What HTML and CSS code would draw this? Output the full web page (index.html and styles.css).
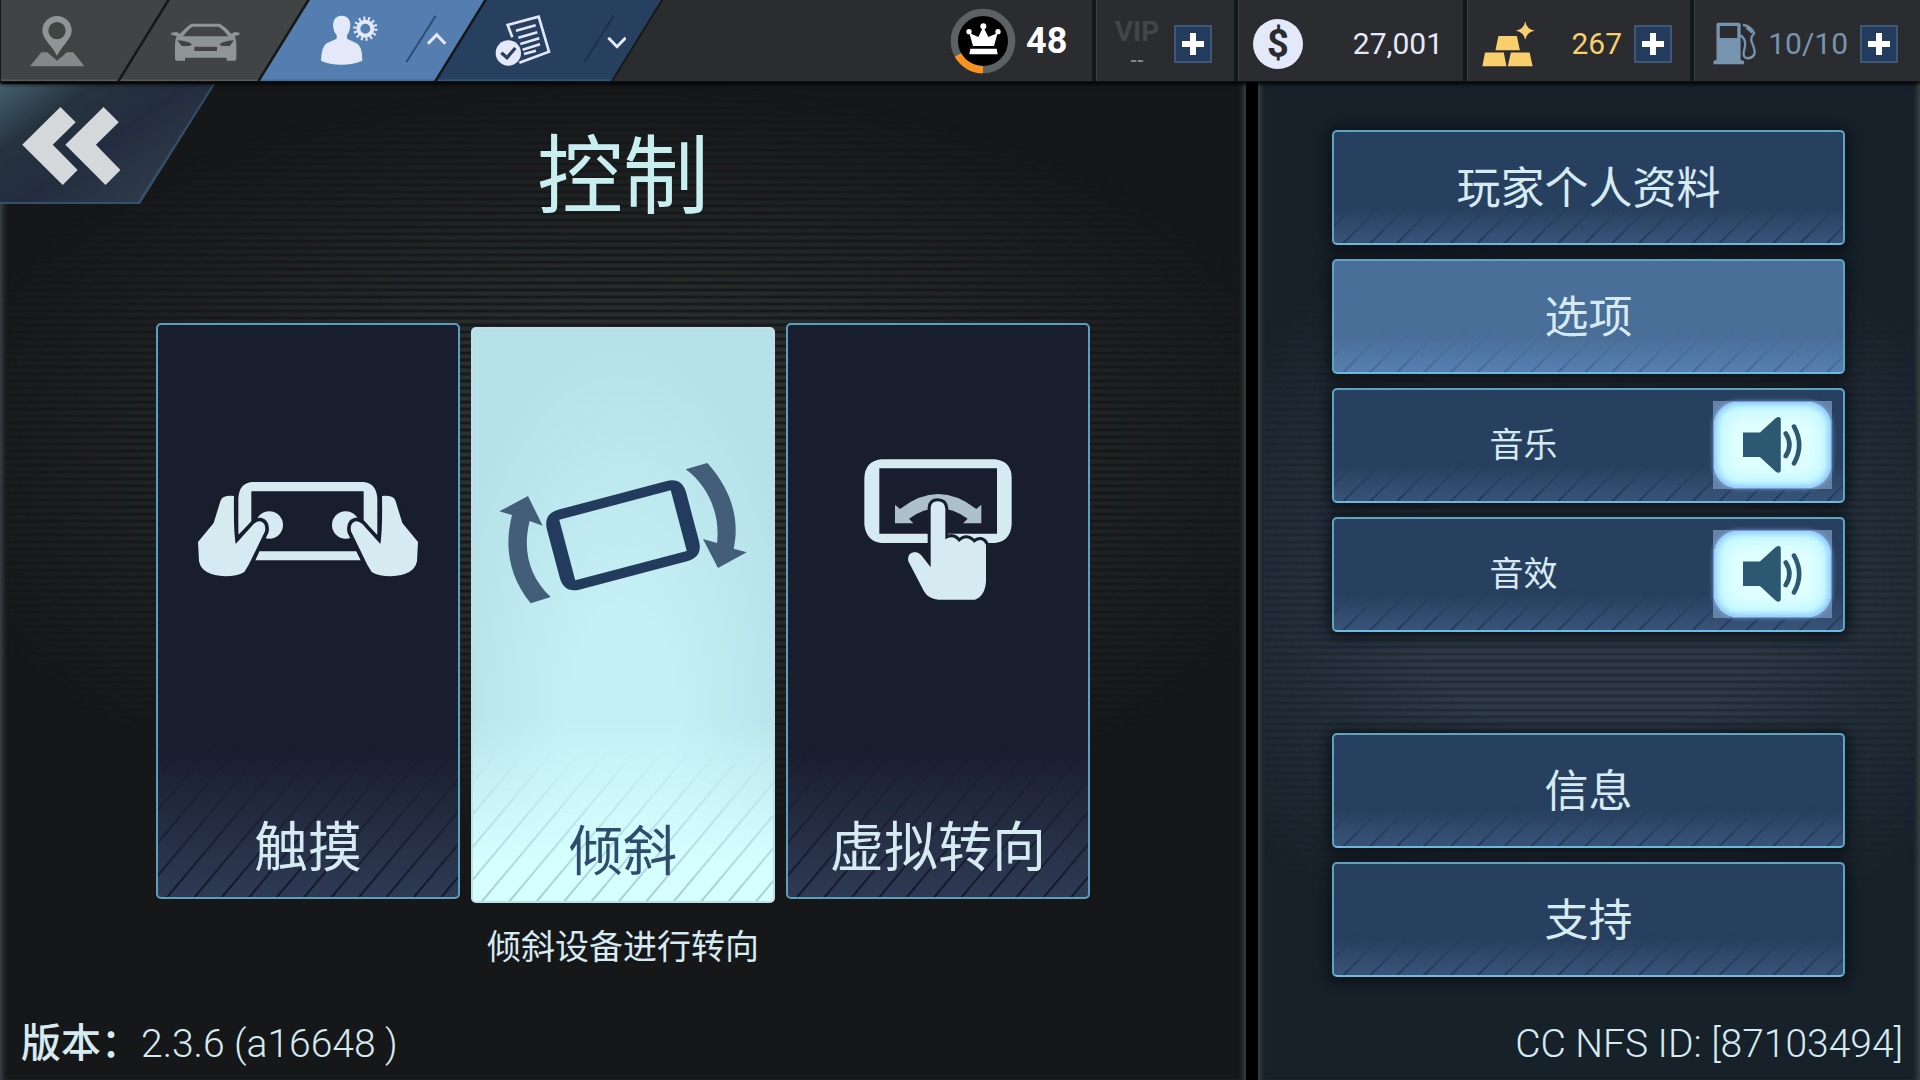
FILE: index.html
```html
<!DOCTYPE html>
<html lang="zh-CN">
<head>
<meta charset="utf-8">
<meta name="viewport" content="width=device-width, initial-scale=1">
<title>控制</title>
<link rel="stylesheet" href="styles.css">
</head>
<body>
<header class="topbar">
  <nav class="tabs">
    <button class="tab tab-map" aria-label="地图">
      <svg width="55" height="54" viewBox="90 42 165 162" fill="#8f9496"><path fill-rule="evenodd" d="M171 168C160 140 127 118 127 92A44 44 0 0 1 215 92C215 118 182 140 171 168ZM171 66A26 26 0 1 0 171 118A26 26 0 1 0 171 66Z"/><path fill="#84888a" d="M124 157H142L171 182L201 157H220L253 199H90Z"/></svg>
    </button>
    <button class="tab tab-car" aria-label="车库">
      <svg width="69" height="54" viewBox="513 42 207 162" fill="#8f9496"><path fill-rule="evenodd" d="M513 98L530 96L540 101Q560 80 574 71H660Q680 83 694 101L704 96L719 98L717 105L704 108Q710 120 709 135V178L705 182H680V173H555V182H529L525 178V135Q525 118 530 108L515 105ZM549 109H685Q672 90 656 80H578Q565 88 549 109ZM532 121L545 138H570L576 132Q555 121 532 121ZM702 121Q679 121 658 132L664 138H689ZM583 140V153H651V140Z"/></svg>
    </button>
    <button class="tab tab-profile" aria-label="个人设置">
      <svg width="57" height="54" viewBox="213 42 171 162"><path fill="#e4e9fa" d="M275 47C295 47 304 62 300 84Q298 98 291 106V116L320 130Q337 138 337 182Q310 194 275 194Q238 194 213 182Q215 138 230 130L260 116V106Q252 98 250 84C247 62 255 47 275 47Z"/><g fill="none" stroke="#e4e9fa"><circle cx="346" cy="86" r="21" stroke-width="12"/><circle cx="346" cy="86" r="31" stroke-width="11" stroke-dasharray="6 7.91"/></g></svg>
      <svg width="42" height="54" viewBox="465 42 126 162" fill="none"><path stroke="#2f4c76" stroke-width="6" d="M469 187L557 47"/><path stroke="#e4e9fa" stroke-width="9" d="M534 131L560 104L586 131"/></svg>
    </button>
    <button class="tab tab-tasks" aria-label="任务">
      <svg width="57" height="54" viewBox="733 38 171 162" fill="none" stroke="#e4e9fa"><path stroke-width="8" d="M785 108L771 71L864 46L895 151L806 184"/><path stroke-width="8" d="M796 88L855 72M803 109L860 93M809 128L866 111M816 145L868 129M820 158L856 148"/><circle cx="773" cy="155" r="38" fill="#e4e9fa" stroke="none"/><path stroke="#28405f" stroke-width="10" d="M752 154L769 169L794 140"/></svg>
      <svg width="42" height="54" viewBox="1000 42 126 162" fill="none"><path stroke="#1d2f4b" stroke-width="6" d="M1001 187L1089 47"/><path stroke="#e4e9fa" stroke-width="9" d="M1073 113L1099 140L1125 113"/></svg>
    </button>
  </nav>
  <div class="stats">
    <div class="stat stat-level">
      <svg width="66" height="66" viewBox="91 24 198 198"><circle cx="190" cy="123" r="86" fill="#000" stroke="#5c6166" stroke-width="22"/><path fill="none" stroke="#f7931e" stroke-width="22" d="M190 209A86 86 0 0 1 115 165"/><g fill="#fff"><path d="M160 138L149 99L176 111L191 80L206 111L234 99L223 138Z"/><circle cx="148" cy="95" r="8"/><circle cx="191" cy="79" r="9"/><circle cx="235" cy="95" r="8"/><path d="M152 146H231L234 163H149Z"/></g></svg>
      <span class="level">48</span>
    </div>
    <div class="stat stat-vip">
      <div class="vip"><span>VIP</span><span class="vip-value">--</span></div>
      <button class="plus" aria-label="VIP 添加"></button>
    </div>
    <div class="stat stat-cash">
      <span class="coin">$</span>
      <span class="amount">27,001</span>
    </div>
    <div class="stat stat-gold">
      <svg width="53" height="46" viewBox="245 54 158 137" fill="#f8cf6c"><path d="M294 99H349L358 141H285ZM254 148H310L318 189H246ZM331 148H387L396 189H322ZM374 55Q378 79 402 83Q378 87 374 110Q370 87 346 83Q370 79 374 55Z"/></svg>
      <span class="amount">267</span>
      <button class="plus" aria-label="添加金币"></button>
    </div>
    <div class="stat stat-fuel">
      <svg width="44" height="43" viewBox="940 64 132 130"><path fill="#7694ae" fill-rule="evenodd" d="M954 66H1019L1023 70V178L1033 182V192H941V182L950 178V70ZM960 76V112H1013V76Z"/><path fill="none" stroke="#7694ae" stroke-width="7" d="M1030 73Q1052 74 1064 98Q1052 110 1056 124Q1069 152 1064 163Q1055 176 1040 173Q1028 168 1034 148Q1043 116 1022 104M1040 80L1058 96"/></svg>
      <span class="amount">10/10</span>
      <button class="plus" aria-label="添加燃油"></button>
    </div>
  </div>
</header>
<div class="content">
  <main class="panel controls">
    <div class="heading">
      <button class="back" aria-label="返回">
        <svg width="99" height="78" viewBox="65 319 297 235" fill="#d5d8da"><path d="M180 319L226 365L157 433L232 509L187 554L65 433ZM310 319L356 365L287 433L361 509L316 554L195 433Z"/></svg>
      </button>
      <h1 class="title">控制</h1>
    </div>
    <div class="cards">
      <button class="card">
        <svg class="card-icon" width="222" height="144" viewBox="170 442 666 432" fill="#d6eaf1"><path d="M294 675V565Q297 520 335 517H670Q707 520 711 565V677L670 637V545H333V637ZM357 725H648L661 752H345Z"/><circle cx="387" cy="646" r="41"/><circle cx="616" cy="646" r="41"/><g stroke="#191e2e" stroke-width="22" paint-order="stroke"><path d="M281 559Q245 556 240 575L220 640L173 697L176 755Q185 798 255 800Q290 800 312 787Q325 768 335 745L374 665Q378 640 360 635Q350 634 340 643L286 703Q279 660 281 559Z"/><path d="M725 559Q761 556 766 575L786 640L833 697L830 755Q821 798 751 800Q716 800 694 787Q681 768 671 745L632 665Q628 640 646 635Q656 634 666 643L720 703Q727 660 725 559Z"/></g></svg>
        <span class="card-label">触摸</span>
      </button>
      <button class="card card-selected" aria-pressed="true">
        <svg class="card-icon" width="248" height="144" viewBox="115 453 744 432"><path fill="#233b5c" fill-rule="evenodd" transform="rotate(-14.8 487 676)" d="M321 552H653Q703 552 703 602V750Q703 800 653 800H321Q271 800 271 750V602Q271 552 321 552ZM314 582V770H660V582Z"/><path fill="#425e79" d="M202 558L116 604L154 615C130 710 145 800 210 880L270 861C205 800 185 720 207 633L246 647ZM675 478L740 459C805 530 840 620 819 716L858 727L772 774L727 687L769 699C780 610 740 525 675 478Z"/></svg>
        <span class="card-label">倾斜</span>
      </button>
      <button class="card">
        <svg class="card-icon" width="148" height="144" viewBox="277 442 444 432"><path fill="#d6eaf1" fill-rule="evenodd" d="M328 449H670Q720 455 720 505V645Q716 694 670 700H328Q284 694 278 645V505Q280 455 328 449ZM323 476V672H676V476Z"/><path fill="#adc0c9" d="M370 585L385 598Q500 508 614 598L629 585V641H574L588 627Q500 565 412 627L425 641H370Z"/><path fill="#d6eaf1" stroke="#191e2e" stroke-width="18" paint-order="stroke" d="M477 773V595Q478 575 498 575Q519 575 521 597V689Q545 673 562 697Q585 673 607 699Q630 680 643 705V815Q640 860 610 870H500Q470 868 457 845L410 755Q405 730 430 727Q442 728 449 737Z"/></svg>
        <span class="card-label">虚拟转向</span>
      </button>
    </div>
    <p class="caption">倾斜设备进行转向</p>
    <p class="version"><span class="version-label">版本：</span><span>2.3.6 (a16648 )</span></p>
  </main>
  <aside class="panel side">
    <nav class="menu">
      <button class="item">玩家个人资料</button>
      <button class="item item-current" aria-current="page">选项</button>
      <div class="item item-toggle">
        <span class="item-name" id="music">音乐</span>
        <button class="toggle" role="switch" aria-checked="true" aria-labelledby="music"><svg width="61" height="57" viewBox="1220 135 184 172" fill="#2d5872"><path d="M1223 185H1274L1322 141Q1336 134 1337 145V300Q1334 310 1322 303L1274 259H1223Z"/><path fill="none" stroke="#2d5872" stroke-width="14" stroke-linecap="round" d="M1352 188Q1374 221 1352 256M1377 167Q1408 222 1377 278"/></svg></button>
      </div>
      <div class="item item-toggle">
        <span class="item-name" id="sound">音效</span>
        <button class="toggle" role="switch" aria-checked="true" aria-labelledby="sound"><svg width="61" height="57" viewBox="1220 135 184 172" fill="#2d5872"><path d="M1223 185H1274L1322 141Q1336 134 1337 145V300Q1334 310 1322 303L1274 259H1223Z"/><path fill="none" stroke="#2d5872" stroke-width="14" stroke-linecap="round" d="M1352 188Q1374 221 1352 256M1377 167Q1408 222 1377 278"/></svg></button>
      </div>
    </nav>
    <nav class="menu menu-help">
      <button class="item">信息</button>
      <button class="item">支持</button>
    </nav>
    <p class="account">CC NFS ID: [87103494]</p>
  </aside>
</div>
</body>
</html>
```
FILE: styles.css
```css
* { box-sizing: border-box; }

body {
  margin: 0;
  min-height: 100vh;
  display: flex;
  flex-direction: column;
  background: #000;
  color: #d6eaf1;
  font-family: Roboto, "Noto Sans CJK SC", sans-serif;
}

button {
  margin: 0;
  padding: 0;
  border: 0;
  color: inherit;
  font: inherit;
  cursor: pointer;
}

svg { display: block; flex: none; }
p, h1 { margin: 0; font-weight: 400; }

/* Top bar */
.topbar {
  position: relative;
  z-index: 1;
  display: flex;
  justify-content: space-between;
  height: 82px;
  background: #2b2c2f;
  border-bottom: 1px solid #101113;
  box-shadow: 0 2px 4px #000;
}

.tabs { display: flex; }

.tab {
  position: relative;
  z-index: 0;
  display: flex;
  align-items: center;
  margin-left: -50px;
  background: #151617;
  clip-path: polygon(50px 0, 100% 0, calc(100% - 50px) 100%, 0 100%);
}

.tab::before {
  content: "";
  position: absolute;
  inset: 0 2px 0 1px;
  z-index: -1;
  background: linear-gradient(to top, #5a5c5b 1px, #414444 2px);
  clip-path: polygon(50px 0, 100% 0, calc(100% - 50px) 100%, 0 100%);
}

.tab-map {
  width: 169px;
  margin-left: 0;
  padding-left: 30px;
  clip-path: polygon(0 0, 100% 0, calc(100% - 50px) 100%, 0 100%);
}
.tab-map::before { clip-path: polygon(0 0, 100% 0, calc(100% - 50px) 100%, 0 100%); }
.tab-car { width: 190px; padding-left: 52px; }
.tab-profile { width: 227px; padding-left: 62px; gap: 27px; }
.tab-profile::before { background: linear-gradient(to top, #3a6ea2 1px, #547eb0 2px); }
.tab-tasks { width: 227px; padding-left: 59px; gap: 32px; }
.tab-tasks::before { background: linear-gradient(to top, #31587c 1px, #28405f 2px); }

.stats { display: flex; }

.stat {
  display: flex;
  align-items: center;
  padding-top: 6px;
  border-left: 4px solid #12171b;
  box-shadow: inset 1px 0 #3d3e41;
}

.stat-level { padding: 0 24px 0 0; gap: 10px; border-left: 0; box-shadow: none; }
.stat-vip { width: 142px; padding-left: 18px; gap: 14px; }
.stat-cash { width: 229px; padding-left: 15px; padding-right: 20px; justify-content: space-between; }
.stat-gold { width: 227px; padding-left: 15px; padding-right: 18px; color: #f8cf6c; }
.stat-fuel { width: 230px; padding-left: 19px; padding-right: 22px; color: #7694ae; }

.stat-gold .amount, .stat-fuel .amount { margin-left: auto; margin-right: 12px; }

.level { width: 42px; color: #fff; font-size: 36px; font-weight: 700; line-height: 40px; }
.amount { font-size: 30px; line-height: 36px; }
.stat-cash .amount { color: #e4e9fa; }

.vip {
  display: flex;
  flex-direction: column;
  align-items: center;
  width: 46px;
  color: #444547;
  font-size: 28px;
  font-weight: 700;
  line-height: 32px;
}
.vip-value { color: #85878a; font-size: 20px; font-weight: 500; line-height: 24px; }

.plus {
  flex: none;
  width: 38px;
  height: 38px;
  border: 2px solid #405878;
  background:
    linear-gradient(#fff, #fff) center / 22px 6px no-repeat,
    linear-gradient(#fff, #fff) center / 6px 22px no-repeat,
    #233b5c;
}

.coin {
  width: 50px;
  height: 50px;
  border-radius: 50%;
  background: #e4e9fa;
  color: #2b2c2f;
  font-size: 38px;
  font-weight: 700;
  line-height: 50px;
  text-align: center;
}

/* Page */
.content {
  flex: 1;
  display: grid;
  grid-template-columns: minmax(0, 1246fr) minmax(0, 662fr);
  column-gap: 12px;
}

.panel {
  position: relative;
  z-index: 0;
  display: flex;
  flex-direction: column;
  background: #161719;
  box-shadow: inset 6px 0 5px -3px #3a4344, inset -6px 0 5px -3px #3a4344;
}

.panel::before {
  content: "";
  position: absolute;
  inset: 0 6px;
  z-index: -1;
  background: repeating-linear-gradient(#2b3031 0 3px, #181b1c 4px 6px, #2b3031 7px);
  mask-image: radial-gradient(ellipse 58% 38% at 50% 38%, #000 30%, transparent);
}

.side { background: #17212a; }
.side::before {
  background: repeating-linear-gradient(#2f3a47 0 3px, #232d38 4px 6px, #2f3a47 7px);
  mask-image: radial-gradient(ellipse 70% 38% at 50% 51%, #000 40%, transparent);
}

.heading {
  display: grid;
  grid-template-columns: 1fr auto 1fr;
  padding-top: 2px;
}

.back {
  position: relative;
  z-index: 0;
  display: flex;
  align-items: center;
  width: 215px;
  height: 120px;
  padding: 4px 0 0 22px;
  background: #35506b;
  clip-path: polygon(0 0, 100% 0, calc(100% - 75px) 100%, 0 100%);
}

.back::before {
  content: "";
  position: absolute;
  inset: 0 2px 2px 0;
  z-index: -1;
  background: linear-gradient(145deg, #45616e, #26333f 25%, #232d3f 50%, #303c4b 85%);
  clip-path: polygon(0 0, 100% 0, calc(100% - 75px) 100%, 0 100%);
}

.title {
  margin-top: 50px;
  color: #c8eef0;
  font-size: 86px;
  line-height: 88px;
}

.cards {
  display: flex;
  justify-content: center;
  gap: 11px;
  margin-top: 101px;
}

.card {
  position: relative;
  z-index: 0;
  display: flex;
  flex-direction: column;
  align-items: center;
  width: 304px;
  height: 576px;
  padding: 132px 0 16px;
  border: 2px solid #5b9fbe;
  border-radius: 5px;
  background: linear-gradient(#191e2e 74%, #2e3a54);
}

.card::before, .item::before {
  content: "";
  position: absolute;
  inset: auto 0 0;
  z-index: -1;
  height: 150px;
  background: repeating-linear-gradient(130deg, transparent 0 18px, #131828 19px 20px, transparent 21px);
  mask-image: linear-gradient(transparent, #000);
}

.card-selected {
  margin: 4px 0 -4px;
  border-color: #c3dfe5;
  background:
    linear-gradient(transparent 68%, #d6ffff 94%),
    radial-gradient(ellipse 60% 65% at 50% 68%, #c3eff5 30%, #b6e1e8);
  color: #2f4c6c;
}
.card-selected::before { background: repeating-linear-gradient(130deg, transparent 0 18px, #a5cdd6 19px 20px, transparent 21px); }

.card-label { margin-top: auto; font-size: 54px; line-height: 64px; }

.caption { margin-top: 24px; font-size: 34px; line-height: 48px; text-align: center; }

.version {
  display: flex;
  align-items: center;
  margin: auto 0 6px;
  padding-left: 21px;
  font-size: 39px;
  font-weight: 300;
  line-height: 60px;
}
.version-label { font-size: 40px; font-weight: 500; }

/* Side menu */
.menu {
  display: flex;
  flex-direction: column;
  gap: 14px;
  padding: 48px 75px 0 74px;
}
.menu-help { padding-top: 101px; }

.item {
  position: relative;
  z-index: 0;
  width: 100%;
  height: 115px;
  padding-bottom: 6px;
  border: 2px solid #5da3c2;
  border-bottom-color: #6fbce0;
  border-radius: 5px;
  background: linear-gradient(#28405f 68%, #385479);
  box-shadow: 0 2px 14px 4px #0d1217;
  font-size: 44px;
}
.item::before {
  height: 42px;
  background: repeating-linear-gradient(135deg, transparent 0 16px, #243a59 17px 18px, transparent 19px);
}
.item-current { background: linear-gradient(#496e98 68%, #5780b0); }
.item-current::before { background: repeating-linear-gradient(135deg, transparent 0 16px, #456891 17px 18px, transparent 19px); }

.item-toggle { display: flex; align-items: center; padding: 0 11px 2px 0; font-size: 34px; }
.item-name { flex: 1; padding-bottom: 4px; text-align: center; }

.toggle {
  position: relative;
  z-index: 0;
  display: grid;
  place-items: center;
  width: 119px;
  height: 88px;
  background: #6583a8;
}
.toggle::before {
  content: "";
  position: absolute;
  inset: 1px;
  z-index: -1;
  border-radius: 24px;
  background: #e0feff;
  box-shadow: 0 0 5px #8abcff, inset 0 0 6px 2px #8abcff, inset 0 0 18px 8px #b4f6ff;
}

.account {
  margin: auto 0 6px;
  padding-right: 17px;
  font-size: 39px;
  font-weight: 300;
  line-height: 60px;
  text-align: right;
}
```
